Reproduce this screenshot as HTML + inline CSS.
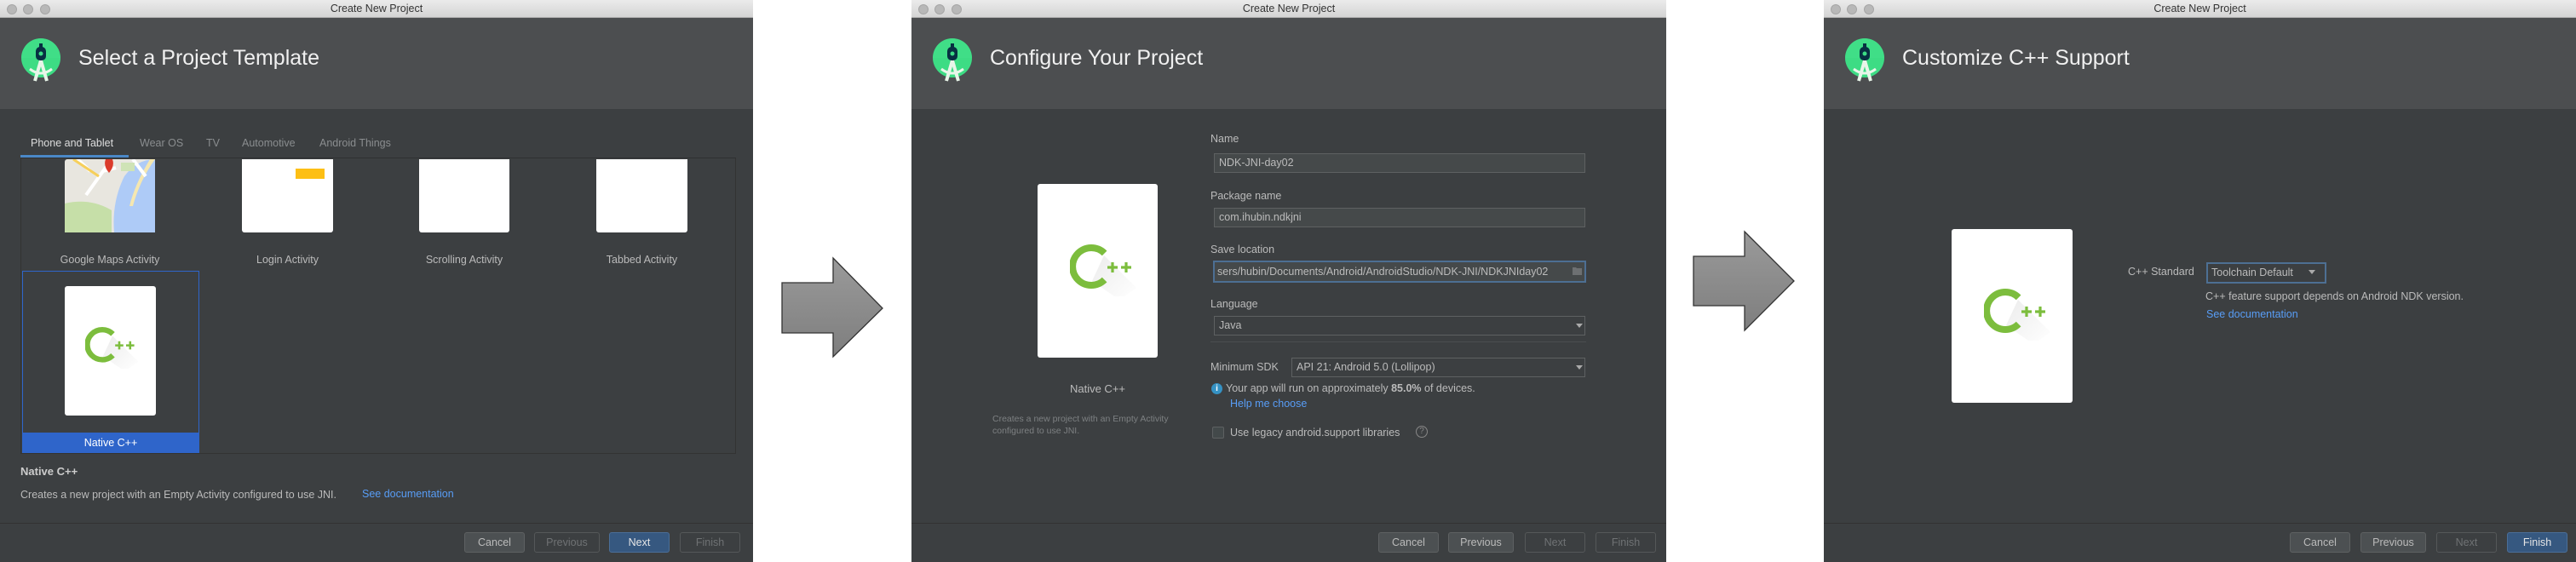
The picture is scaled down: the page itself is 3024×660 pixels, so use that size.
<!DOCTYPE html>
<html><head><meta charset="utf-8">
<style>
*{margin:0;padding:0;box-sizing:border-box}
body{width:3024px;height:660px;background:#fff;position:relative;overflow:hidden;font-family:"Liberation Sans",sans-serif;}
.win{position:absolute;top:0;height:660px;background:#3c3f41;overflow:hidden}
.tb{position:absolute;left:0;right:0;top:0;height:21px;background:linear-gradient(#ebebeb,#d4d4d4);border-bottom:1px solid #b0b0b0;font-size:12.5px;color:#333;text-align:center;line-height:21px}
.dot{position:absolute;top:5px;width:12px;height:12px;border-radius:50%;background:#b8b8b8;border:1px solid #a6a6a6}
.hd{position:absolute;left:0;right:0;top:21px;height:107px;background:#4c4e50}
.logo{position:absolute;left:24px;top:24px}
.ttl{position:absolute;left:92px;top:33px;font-size:25px;color:#f0f0f0}
.ab{position:absolute;white-space:nowrap}
.lbl{font-size:12.5px;color:#bbb}
.btn{position:absolute;top:625px;height:24px;width:71px;border:1px solid #5e6162;border-radius:3px;font-size:12.5px;line-height:22px;text-align:center;color:#bbb}
.btn.en{background:#4c5052;border-color:#5e6162}
.btn.dis{color:#6f7274;background:transparent;border-color:#555859}
.btn.pri{background:#365880;border-color:#4a6e98;color:#e6e6e6}
.sep{position:absolute;left:0;right:0;top:614px;height:1px;background:#323232}
.fld{position:absolute;height:23px;background:#45494a;border:1px solid #5e6162;font-size:12.5px;color:#bbb;line-height:21px;padding-left:5px;white-space:nowrap;overflow:hidden}
.card{position:absolute;background:#fff;border-radius:3px}
.arrow{position:absolute}
</style></head><body>

<svg width="0" height="0" style="position:absolute">
<defs>
<linearGradient id="ag" x1="0" y1="0" x2="0" y2="1"><stop offset="0" stop-color="#9a9a9a"/><stop offset="1" stop-color="#7e7e7e"/></linearGradient>
<linearGradient id="sh" x1="0" y1="0" x2="1" y2="1"><stop offset="0" stop-color="#ececec"/><stop offset="1" stop-color="#ffffff"/></linearGradient>
<g id="as">
<circle cx="23" cy="23" r="23" fill="#3ddc84"/>
<path d="M0 23 A23 23 0 0 1 46 23 Z" fill="#43e08a" opacity=".5"/>
<path d="M16 50 L23 26 L30 50" stroke="#e8f5e9" stroke-width="4" fill="none"/>
<path d="M10 36 Q23 46 36 36" stroke="#e8f5e9" stroke-width="3" fill="none"/>
<rect x="17" y="10" width="12" height="16" rx="5" fill="#073042"/>
<rect x="21" y="6" width="4" height="5" fill="#073042"/>
<circle cx="23" cy="18" r="2.5" fill="#3ddc84"/>
</g>
<g id="cpp">
<path d="M40 14 L78 52 L58 66 L26 44 Z" fill="url(#sh)"/>
<path d="M40.6 11.4 A22 22 0 1 0 40.6 42.6" stroke="#7cbd3d" stroke-width="8" fill="none"/>
<path d="M44 28 h12 M50 22 v12 M60 28 h12 M66 22 v12" stroke="#7cbd3d" stroke-width="3.2" fill="none"/>
</g>
</defs>
</svg>

<!-- WINDOW 1 -->
<div class="win" style="left:0;width:884px">
<div class="tb">Create New Project<div class="dot" style="left:8px"></div><div class="dot" style="left:27px"></div><div class="dot" style="left:47px"></div></div>
<div class="hd"><svg class="logo" width="48" height="52" viewBox="0 0 46 52"><use href="#as"/></svg><div class="ttl">Select a Project Template</div></div>
<div class="ab lbl" style="left:36px;top:161px;color:#ddd">Phone and Tablet</div>
<div class="ab" style="left:24px;top:182px;width:127px;height:3px;background:#4a88c7"></div>
<div class="ab lbl" style="left:164px;top:161px;color:#8a8d8f">Wear OS</div>
<div class="ab lbl" style="left:242px;top:161px;color:#8a8d8f">TV</div>
<div class="ab lbl" style="left:284px;top:161px;color:#8a8d8f">Automotive</div>
<div class="ab lbl" style="left:375px;top:161px;color:#8a8d8f">Android Things</div>
<div class="ab" style="left:24px;top:185px;width:840px;height:1px;background:#2f3031"></div>
<div class="ab" style="left:24px;top:186px;width:840px;height:347px;background:#3c3f41;border:1px solid #333;border-top:none"></div>
<svg class="ab" style="left:76px;top:187px" width="106" height="86" viewBox="0 0 106 86">
<rect width="106" height="86" rx="3" fill="#e8e6df"/>
<path d="M0 52 Q30 45 55 60 L55 86 L0 86 Z" fill="#c6dfa8"/>
<path d="M58 86 Q55 50 70 20 Q85 0 106 0 L106 86 Z" fill="#aecbf7"/>
<path d="M76 55 Q82 30 100 0 L106 0 Q88 25 80 55 Z" fill="#f5e7b0"/>
<path d="M25 42 L55 0 M45 14 L60 10 M15 0 L30 14" stroke="#fff" stroke-width="4"/>
<path d="M10 0 L40 20" stroke="#f6cf5a" stroke-width="3"/>
<path d="M80 0 L95 20" stroke="#fff" stroke-width="4"/>
<path d="M56 0 Q59 8 52 16 Q45 8 48 0 Z" fill="#db3b2b"/>
<rect x="66" y="4" width="16" height="10" fill="#cfe3b6"/>
</svg>
<div class="card" style="left:284px;top:187px;width:107px;height:86px;border-radius:0 0 3px 3px"></div>
<div class="ab" style="left:347px;top:198px;width:34px;height:12px;background:#fdbf14"></div>
<div class="card" style="left:492px;top:187px;width:106px;height:86px;border-radius:0 0 3px 3px"></div>
<div class="card" style="left:700px;top:187px;width:107px;height:86px;border-radius:0 0 3px 3px"></div>
<div class="ab lbl" style="left:0;width:258px;text-align:center;top:298px;font-size:12.5px">Google Maps Activity</div>
<div class="ab lbl" style="left:284px;width:107px;text-align:center;top:298px">Login Activity</div>
<div class="ab lbl" style="left:480px;width:130px;text-align:center;top:298px">Scrolling Activity</div>
<div class="ab lbl" style="left:690px;width:127px;text-align:center;top:298px">Tabbed Activity</div>
<div class="ab" style="left:26px;top:318px;width:208px;height:214px;border:1px solid #2f65ca"></div>
<div class="card" style="left:76px;top:336px;width:107px;height:152px"></div>
<svg class="ab" style="left:100px;top:383px" width="64" height="50" viewBox="0 0 80 62"><use href="#cpp"/></svg>
<div class="ab" style="left:26px;top:508px;width:208px;height:24px;background:#2f65ca;color:#fff;font-size:12.5px;text-align:center;line-height:24px">Native C++</div>
<div class="ab" style="left:24px;top:546px;font-size:13px;font-weight:bold;color:#ccc">Native C++</div>
<div class="ab lbl" style="left:24px;top:574px">Creates a new project with an Empty Activity configured to use JNI.</div>
<div class="ab lbl" style="left:425px;top:573px;color:#589df6">See documentation</div>
<div class="sep"></div>
<div class="btn en" style="left:545px">Cancel</div>
<div class="btn dis" style="left:627px;width:77px">Previous</div>
<div class="btn pri" style="left:715px">Next</div>
<div class="btn dis" style="left:798px">Finish</div>
</div>

<!-- ARROW 1 -->
<svg class="arrow" style="left:910px;top:298px" width="132" height="126" viewBox="910 298 132 126">
<path d="M918 332 L978 332 L978 303 L1036 362 L978 419 L978 391 L918 391 Z" fill="url(#ag)" stroke="#333" stroke-width="1.3"/>
</svg>

<!-- WINDOW 2 -->
<div class="win" style="left:1070px;width:886px">
<div class="tb">Create New Project<div class="dot" style="left:8px"></div><div class="dot" style="left:27px"></div><div class="dot" style="left:47px"></div></div>
<div class="hd"><svg class="logo" width="48" height="52" viewBox="0 0 46 52"><use href="#as"/></svg><div class="ttl">Configure Your Project</div></div>
<div class="card" style="left:148px;top:216px;width:141px;height:204px"></div>
<svg class="ab" style="left:186px;top:286px" width="80" height="62" viewBox="0 0 80 62"><use href="#cpp"/></svg>
<div class="ab lbl" style="left:148px;width:141px;text-align:center;top:449px;font-size:13px">Native C++</div>
<div class="ab" style="left:95px;top:485px;font-size:10.5px;color:#7d8082;line-height:14px">Creates a new project with an Empty Activity<br>configured to use JNI.</div>
<div class="ab lbl" style="left:351px;top:156px">Name</div>
<div class="fld" style="left:355px;top:180px;width:436px">NDK-JNI-day02</div>
<div class="ab lbl" style="left:351px;top:223px">Package name</div>
<div class="fld" style="left:355px;top:244px;width:436px">com.ihubin.ndkjni</div>
<div class="ab lbl" style="left:351px;top:286px">Save location</div>
<div class="fld" style="left:354px;top:306px;width:438px;height:26px;border:2px solid #4d6f93;line-height:22px;padding-left:3px">sers/hubin/Documents/Android/AndroidStudio/NDK-JNI/NDKJNIday02</div>
<svg class="ab" style="left:776px;top:313px" width="12" height="10"><path d="M0 1h4l1 1h6v8H0z" fill="#6d7072"/></svg>
<div class="ab lbl" style="left:351px;top:350px">Language</div>
<div class="fld" style="left:355px;top:371px;width:436px;background:#3c3f41">Java</div>
<div class="ab" style="left:780px;top:380px;border:4px solid transparent;border-top:5px solid #aaa"></div>
<div class="ab" style="left:351px;top:401px;width:441px;height:1px;background:#4a4d4f"></div>
<div class="ab lbl" style="left:351px;top:424px">Minimum SDK</div>
<div class="fld" style="left:446px;top:420px;width:345px;background:#3c3f41">API 21: Android 5.0 (Lollipop)</div>
<div class="ab" style="left:780px;top:429px;border:4px solid transparent;border-top:5px solid #aaa"></div>
<div class="ab" style="left:352px;top:450px;width:13px;height:13px;border-radius:50%;background:#3592c4;color:#fff;font-size:10px;font-weight:bold;text-align:center;line-height:13px">i</div>
<div class="ab lbl" style="left:369px;top:449px">Your app will run on approximately <b>85.0%</b> of devices.</div>
<div class="ab lbl" style="left:374px;top:467px;color:#589df6">Help me choose</div>
<div class="ab" style="left:353px;top:501px;width:14px;height:14px;border:1px solid #5e6162;border-radius:2px;background:#43494a"></div>
<div class="ab lbl" style="left:374px;top:501px">Use legacy android.support libraries</div>
<div class="ab" style="left:592px;top:500px;width:14px;height:14px;border:1px solid #888;border-radius:50%;color:#888;font-size:10px;text-align:center;line-height:12px">?</div>
<div class="sep"></div>
<div class="btn en" style="left:548px">Cancel</div>
<div class="btn en" style="left:630px;width:77px">Previous</div>
<div class="btn dis" style="left:720px">Next</div>
<div class="btn dis" style="left:803px">Finish</div>
</div>

<!-- ARROW 2 -->
<svg class="arrow" style="left:1980px;top:266px" width="132" height="128" viewBox="1980 266 132 128">
<path d="M1988 301 L2048 301 L2048 272 L2106 330 L2048 388 L2048 359 L1988 359 Z" fill="url(#ag)" stroke="#333" stroke-width="1.3"/>
</svg>

<!-- WINDOW 3 -->
<div class="win" style="left:2141px;width:883px">
<div class="tb">Create New Project<div class="dot" style="left:8px"></div><div class="dot" style="left:27px"></div><div class="dot" style="left:47px"></div></div>
<div class="hd"><svg class="logo" width="48" height="52" viewBox="0 0 46 52"><use href="#as"/></svg><div class="ttl">Customize C++ Support</div></div>
<div class="card" style="left:150px;top:269px;width:142px;height:204px"></div>
<svg class="ab" style="left:188px;top:338px" width="80" height="62" viewBox="0 0 80 62"><use href="#cpp"/></svg>
<div class="ab lbl" style="left:357px;top:312px">C++ Standard</div>
<div class="fld" style="left:449px;top:308px;width:141px;height:25px;border:2px solid #4d6f93;background:#3c3f41;line-height:21px;padding-left:4px">Toolchain Default</div>
<div class="ab" style="left:569px;top:317px;border:4px solid transparent;border-top:5px solid #aaa"></div>
<div class="ab lbl" style="left:448px;top:341px">C++ feature support depends on Android NDK version.</div>
<div class="ab lbl" style="left:449px;top:362px;color:#589df6">See documentation</div>
<div class="sep"></div>
<div class="btn en" style="left:547px">Cancel</div>
<div class="btn en" style="left:630px;width:77px">Previous</div>
<div class="btn dis" style="left:719px">Next</div>
<div class="btn pri" style="left:802px">Finish</div>
</div>
</body></html>
